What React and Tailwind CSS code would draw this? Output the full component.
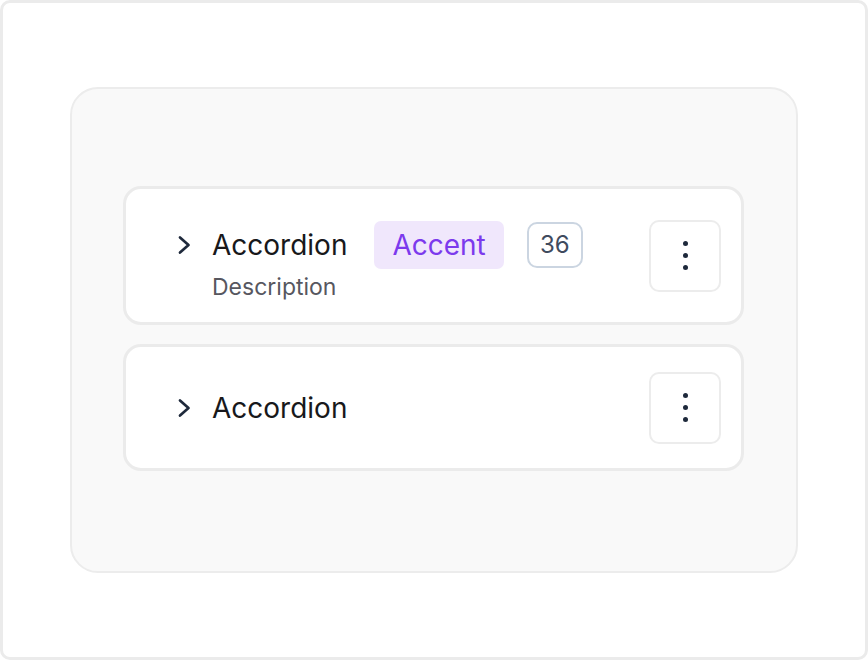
import { useState } from 'react'

function Chevron() {
  return (
    <svg viewBox="0 0 14 20" className="w-[14px] h-[20px] shrink-0" fill="none">
      <polyline points="3,2.5 11.5,10 3,17.5" stroke="#1e293b" strokeWidth="2.7" strokeLinecap="round" strokeLinejoin="round" />
    </svg>
  )
}

function MenuButton() {
  return (
    <button className="ml-auto w-[72px] h-[72px] shrink-0 rounded-[10px] border-2 border-[#ececec] bg-white flex flex-col items-center justify-center gap-[7px]">
      <span className="w-[5px] h-[5px] rounded-full bg-[#1e293b]" />
      <span className="w-[5px] h-[5px] rounded-full bg-[#1e293b]" />
      <span className="w-[5px] h-[5px] rounded-full bg-[#1e293b]" />
    </button>
  )
}

function AccordionCard({ title, description, accent, count, height }) {
  const [open, setOpen] = useState(false)
  return (
    <div
      onClick={() => setOpen(!open)}
      className={`flex items-center bg-white border-[3px] border-[#ebebeb] rounded-[18px] pl-[51px] pr-[20px] ${height}`}
    >
      <div className={description ? 'mt-[10px]' : ''}>
        <div className="flex items-center h-[48px]">
          <Chevron />
          <span className="ml-[21px] text-[28px] leading-none text-[#18181b]">{title}</span>
          {accent && (
            <span className="ml-[27px] h-[48px] px-[18px] flex items-center rounded-[7px] bg-[#f0e7fc] text-[28px] text-[#7c3aed]">
              {accent}
            </span>
          )}
          {count && (
            <span className="ml-[23px] w-[56px] h-[46px] flex items-center justify-center rounded-[10px] border-2 border-[#cbd5e1] text-[24px] text-[#3f4b5e]">
              {count}
            </span>
          )}
        </div>
        {description && (
          <p className="ml-[35px] mt-[4px] text-[23px] leading-[28px] text-[#57575f]">{description}</p>
        )}
      </div>
      <MenuButton />
    </div>
  )
}

export default function App() {
  return (
    <div className="w-[868px] h-[660px] bg-white border-[3px] border-[#ebebeb] rounded-[10px] flex items-center justify-center font-['Inter',sans-serif]">
      <div className="w-[728px] h-[486px] bg-[#f9f9f9] border-2 border-[#ececec] rounded-[28px] pl-[51px] pr-[52px] pt-[97px] flex flex-col gap-[19px]">
        <AccordionCard title="Accordion" description="Description" accent="Accent" count="36" height="h-[139px]" />
        <AccordionCard title="Accordion" height="h-[127px]" />
      </div>
    </div>
  )
}
